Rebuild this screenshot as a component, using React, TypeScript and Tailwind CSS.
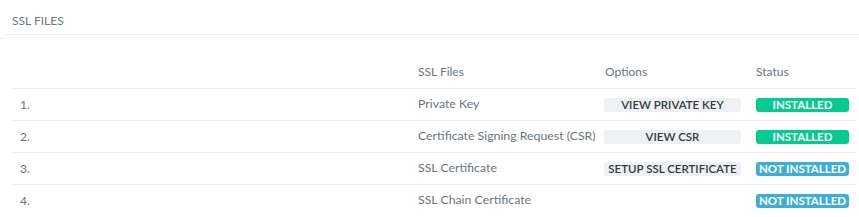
import React from "react";

type Row = { n: string; file: string; option?: string; installed: boolean };

const rows: Row[] = [
  { n: "1.", file: "Private Key", option: "VIEW PRIVATE KEY", installed: true },
  { n: "2.", file: "Certificate Signing Request (CSR)", option: "VIEW CSR", installed: true },
  { n: "3.", file: "SSL Certificate", option: "SETUP SSL CERTIFICATE", installed: false },
  { n: "4.", file: "SSL Chain Certificate", installed: false },
];

export default function App() {
  return (
    <div className="relative w-[859px] h-[217px] overflow-hidden bg-white text-[#6c757d] font-['Lato','Noto_Sans',sans-serif]">
      <div className="ml-[6px] h-[35px] border-b border-[#efeff6] pl-[6px] pt-[7px]">
        <span className="text-[12px] uppercase text-[#6f7780]">SSL Files</span>
      </div>
      <div className="absolute left-0 top-[38px] h-px w-[6px] bg-[#f0f0f5]" />
      <div className="mx-[12px] mt-[21px] w-[844px] text-[12px]">
        <div className="grid h-[32px] grid-cols-[398px_187px_151px_108px] items-center">
          <div />
          <div className="pl-[8px]">SSL Files</div>
          <div className="pl-[8px]">Options</div>
          <div className="pl-[8px]">Status</div>
        </div>
        {rows.map((r) => (
          <div
            key={r.n}
            className="grid h-[32px] grid-cols-[398px_187px_151px_108px] items-center border-t border-[#ebedf0]"
          >
            <div className="pl-[8px]">{r.n}</div>
            <div className="pl-[8px] text-[12.3px]">{r.file}</div>
            <div className="pl-[7px]">
              {r.option && (
                <div className="flex h-[14px] w-[137px] items-center justify-center rounded-[3px] bg-[#edf0f5] text-[11.5px] font-semibold text-[#343a40]">
                  {r.option}
                </div>
              )}
            </div>
            <div className="pl-[8px]">
              <div
                className={`flex h-[14px] w-[93px] items-center justify-center rounded-[3px] text-[11.5px] font-bold text-white ${
                  r.installed ? "bg-[#05ca91]" : "bg-[#3faed5]"
                }`}
              >
                {r.installed ? "INSTALLED" : "NOT INSTALLED"}
              </div>
            </div>
          </div>
        ))}
      </div>
    </div>
  );
}
